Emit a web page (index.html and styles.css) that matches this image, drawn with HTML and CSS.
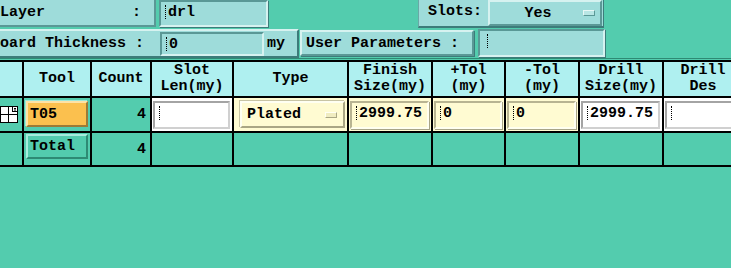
FILE: index.html
```html
<!DOCTYPE html>
<html>
<head>
<meta charset="utf-8">
<link rel="stylesheet" href="styles.css">
</head>
<body>
<div class="app">
  <div class="bar bar1">
    <div class="btn layer-btn"><span>Layer</span><span>:</span></div>
    <div class="field drl-field"><span class="caret"></span><span>drl</span></div>
    <div class="slots">
      <span class="slots-label">Slots:</span>
      <div class="btn option-btn"><span class="opt-text">Yes</span><span class="opt-ind"></span></div>
    </div>
  </div>
  <div class="bar bar2">
    <div class="thick-panel">
      <span class="thick-label">Board Thickness :</span>
      <div class="field thick-field"><span class="caret"></span><span>0</span></div>
      <span class="unit">my</span>
    </div>
    <div class="btn userp-btn">User Parameters :</div>
    <div class="field userp-field"><span class="caret"></span></div>
  </div>
  <div class="sep"></div>
  <div class="grid">
    <div class="cell head"></div>
    <div class="cell head">Tool</div>
    <div class="cell head">Count</div>
    <div class="cell head">Slot<br>Len(my)</div>
    <div class="cell head">Type</div>
    <div class="cell head">Finish<br>Size(my)</div>
    <div class="cell head">+Tol<br>(my)</div>
    <div class="cell head">-Tol<br>(my)</div>
    <div class="cell head">Drill<br>Size(my)</div>
    <div class="cell head">Drill<br>Des</div>

    <div class="cell row1 tree">
      <svg class="tree-icon" width="18" height="17" viewBox="0 0 18 17">
        <rect x="0.5" y="0.5" width="17" height="16" fill="#fff" stroke="#000"/>
        <line x1="1" y1="8.5" x2="17" y2="8.5" stroke="#000"/>
        <line x1="8.5" y1="1" x2="8.5" y2="16" stroke="#000"/>
        <rect x="12.5" y="0.5" width="5" height="5" fill="#fff" stroke="#000"/>
        <line x1="14" y1="2.5" x2="16" y2="2.5" stroke="#000"/>
        <line x1="14" y1="4" x2="16" y2="4" stroke="#000"/>
      </svg>
    </div>
    <div class="cell row1 tool"><div class="btn tool-btn orange">T05</div></div>
    <div class="cell row1 count">4</div>
    <div class="cell row1 wcell"><div class="field tfield white"><span class="caret"></span></div></div>
    <div class="cell row1 ccell"><div class="btn type-btn"><span>Plated</span><span class="opt-ind cream-ind"></span></div></div>
    <div class="cell row1 ccell"><div class="field tfield cream"><span class="caret"></span><span>2999.75</span></div></div>
    <div class="cell row1 ccell"><div class="field tfield cream"><span class="caret"></span><span>0</span></div></div>
    <div class="cell row1 ccell"><div class="field tfield cream"><span class="caret"></span><span>0</span></div></div>
    <div class="cell row1 wcell"><div class="field tfield white"><span class="caret"></span><span>2999.75</span></div></div>
    <div class="cell row1 wcell"><div class="field tfield white last"><span class="caret"></span></div></div>

    <div class="cell row2"></div>
    <div class="cell row2 tool"><div class="btn tool-btn total">Total</div></div>
    <div class="cell row2 count">4</div>
    <div class="cell row2"></div>
    <div class="cell row2"></div>
    <div class="cell row2"></div>
    <div class="cell row2"></div>
    <div class="cell row2"></div>
    <div class="cell row2"></div>
    <div class="cell row2"></div>
  </div>
</div>
</body>
</html>
```

FILE: styles.css
```css
html, body {
  margin: 0;
  padding: 0;
}
body {
  width: 731px;
  height: 268px;
  overflow: hidden;
  background: #53ccae;
  font-family: "Liberation Mono", "DejaVu Sans Mono", monospace;
  font-weight: bold;
  font-size: 15px;
  color: #000;
}
.app {
  width: 731px;
}
.bar {
  display: flex;
  box-sizing: border-box;
}
.bar1 {
  height: 28px;
  align-items: flex-start;
}
.btn {
  box-sizing: border-box;
  border: 2px solid;
  border-color: #d6f2f0 #5a9896 #5a9896 #d6f2f0;
  background: #9edcda;
  display: flex;
  align-items: center;
}
.field {
  box-sizing: border-box;
  border: 2px solid;
  border-color: #5a9896 #d6f2f0 #d6f2f0 #5a9896;
  background: #9edcda;
  display: flex;
  align-items: flex-start;
  padding: 2px 0 0 4px;
}
.caret {
  display: inline-block;
  width: 3px;
  height: 14px;
  margin-top: 1px;
  border-left: 1px dotted #000;
  box-sizing: border-box;
  flex: none;
}
.layer-btn {
  margin-left: -8px;
  margin-top: -2px;
  width: 164px;
  height: 29px;
  justify-content: space-between;
  padding: 0 13px 0 6px;
}
.drl-field {
  margin-left: 3px;
  width: 109px;
  height: 27px;
  box-shadow: 1px 1px 0 #3c7c7a;
}
.slots {
  margin-left: 150px;
  width: 186px;
  height: 28px;
  box-sizing: border-box;
  background: #9edcda;
  border-left: 1px solid #6aa8a6;
  border-right: 1px solid #3c7c7a;
  border-bottom: 2px solid #3c7c7a;
  display: flex;
  align-items: flex-start;
}
.slots-label {
  margin: 3px 0 0 9px;
  width: 60px;
}
.option-btn {
  width: 114px;
  height: 26px;
  position: relative;
  justify-content: center;
}
.opt-text {
  margin-left: -14px;
}
.opt-ind {
  position: absolute;
  right: 5px;
  top: 8px;
  width: 12px;
  height: 6px;
  box-sizing: border-box;
  border: 1px solid;
  border-color: #e8f8f6 #5a9896 #5a9896 #e8f8f6;
  background: #b8e6e4;
}
.bar2 {
  height: 30px;
  align-items: flex-start;
}
.thick-panel {
  margin-left: -12px;
  margin-top: 1px;
  width: 311px;
  height: 29px;
  box-sizing: border-box;
  background: #9edcda;
  border: 2px solid;
  border-color: #d6f2f0 #3c7c7a #3c7c7a #d6f2f0;
  display: flex;
  align-items: center;
  padding-left: 1px;
}
.thick-label {
  width: 169px;
  flex: none;
  white-space: pre;
}
.thick-field {
  width: 104px;
  height: 24px;
  flex: none;
  padding-top: 2px;
}
.unit {
  margin-left: 3px;
}
.userp-btn {
  margin-left: 1px;
  margin-top: 2px;
  width: 174px;
  height: 26px;
  padding-left: 4px;
  white-space: pre;
  box-shadow: 1px 1px 0 #3c7c7a;
}
.userp-field {
  margin-left: 4px;
  margin-top: 1px;
  width: 127px;
  height: 28px;
  padding-left: 7px;
  box-shadow: 1px 1px 0 #3c7c7a;
}
.sep {
  height: 1px;
  background: #2e8a74;
  margin-bottom: 1px;
}
.grid {
  display: grid;
  grid-template-columns: 24px 68px 60px 82px 115px 84px 73px 74px 84px 80px;
  grid-template-rows: 36px 35px 34px;
  border-top: 2px solid #000;
  width: 744px;
}
.cell {
  box-sizing: border-box;
  border-right: 2px solid #000;
  border-bottom: 2px solid #000;
  background: #53ccae;
  display: flex;
  align-items: flex-start;
  min-width: 0;
}
.head {
  background: #aff0f0;
  justify-content: center;
  align-items: center;
  text-align: center;
  line-height: 16px;
  white-space: nowrap;
}
.row1 {
  padding-top: 3px;
}
.row2 {
  padding-top: 1px;
}
.tree {
  align-items: flex-start;
  padding-top: 8px;
}
.tree-icon {
  display: block;
}
.tool {
  padding-left: 2px;
}
.tool-btn {
  width: 62px;
  padding-left: 2px;
}
.orange {
  height: 26px;
  background: #fbc04e;
  border-color: #fde2a6 #9c7a36 #9c7a36 #fde2a6;
  box-shadow: -1px -1px 0 #a0e8d8;
}
.total {
  height: 25px;
  background: #53ccae;
  border-color: #a6ecdc #2e8a74 #2e8a74 #a6ecdc;
}
.count {
  justify-content: flex-end;
  align-items: center;
  padding-right: 4px;
}
.row1.count,
.row2.count {
  padding-top: 0;
}
.wcell {
  background: #fff;
}
.ccell {
  background: #fffbd2;
}
.tfield {
  margin-left: 1px;
  width: calc(100% - 3px);
  height: 28px;
  padding: 2px 0 0 4px;
}
.tfield.last {
  width: 100%;
}
.white {
  background: #fff;
  border-color: #a4a4a4 #d0d0d0 #d0d0d0 #a4a4a4;
}
.cream {
  background: #fffbd2;
  border-color: #b8b492 #fffff0 #fffff0 #b8b492;
  box-shadow: 1px 1px 0 #a8a486;
}
.type-btn {
  margin-left: 6px;
  width: 105px;
  height: 27px;
  background: #fffbd2;
  border-color: #fffff2 #aaa684 #aaa684 #fffff2;
  box-shadow: -1px -1px 0 #c8c4a4;
  position: relative;
  padding-left: 5px;
}
.cream-ind {
  top: 9px;
  right: 6px;
  background: #f0ecc0;
  border-color: #fffff4 #aaa684 #aaa684 #fffff4;
}
```
